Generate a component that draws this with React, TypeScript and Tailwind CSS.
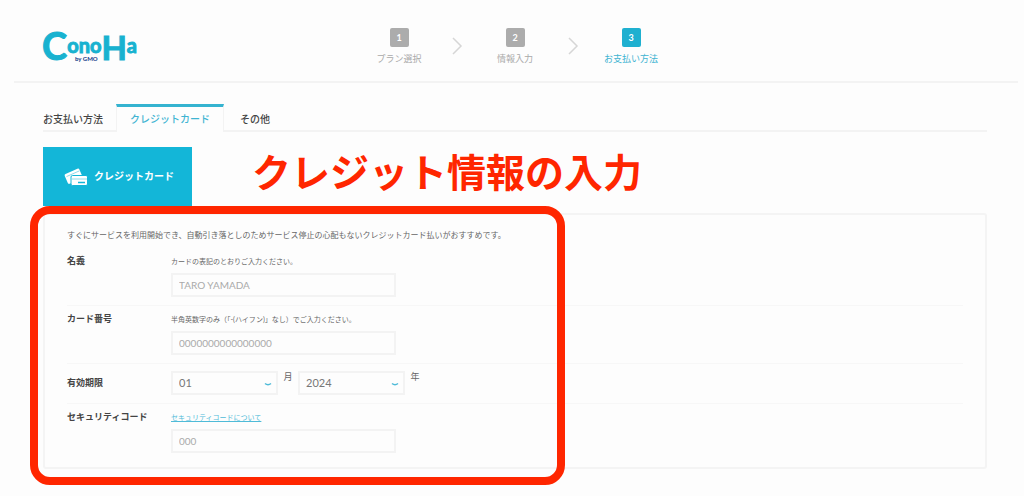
import { ReactNode, useState } from "react";
import clsx from "clsx";

const steps = ["プラン選択", "情報入力", "お支払い方法"];
const tabs = ["お支払い方法", "クレジットカード", "その他"];
const months = Array.from({ length: 12 }, (_, i) =>
  String(i + 1).padStart(2, "0")
);
const years = Array.from({ length: 10 }, (_, i) => String(2024 + i));

function App() {
  const [activeTab, setActiveTab] = useState(1);

  return (
    <div className="min-h-screen bg-[#fdfdfd] pb-2 font-['Lato','Noto_Sans_CJK_JP',sans-serif] text-[#444]">
      <Header current={2} />

      <main className="ml-[43px] mr-[37px] pt-[21px]">
        <nav className="flex h-7 border-b-2 border-[#f3f3f3] text-[10px] font-medium">
          {tabs.map((tab, i) => (
            <button
              key={tab}
              type="button"
              onClick={() => setActiveTab(i)}
              className={clsx(
                "h-7 border-t-[3px] px-[13px] first:pl-0 last:pl-4",
                i === activeTab
                  ? "border-x border-x-[#f3f3f3] border-t-[#35b3d0] bg-[#fdfdfd] text-[#3fb4d2]"
                  : "border-t-transparent"
              )}
            >
              {tab}
            </button>
          ))}
        </nav>

        <div className="mt-[15px] flex items-start gap-[60px]">
          <button
            type="button"
            className="flex h-[59px] w-[149px] items-center gap-[6px] bg-[#13b6d8] pl-[21px] text-[10px] font-bold text-white"
          >
            <CardsIcon />
            クレジットカード
          </button>
          <h1 className="whitespace-nowrap text-[39px] font-bold leading-[50px] text-[#ff2600]">
            クレジット情報の入力
          </h1>
        </div>

        <div className="relative mt-[7px]">
          <form className="rounded-[3px] border-2 border-[#f4f4f4] px-[22px] pt-[14px] pb-[6px]">
            <p className="text-[8px] leading-3 text-[#666]">
              すぐにサービスを利用開始でき、自動引き落としのためサービス停止の心配もないクレジットカード払いがおすすめです。
            </p>
            <div className="mt-[7px] divide-y divide-[#f7f7f7]">
              <Row label="名義" htmlFor="holder">
                <Hint>カードの表記のとおりご入力ください。</Hint>
                <TextBox id="holder" placeholder="TARO YAMADA" />
              </Row>
              <Row label="カード番号" htmlFor="number">
                <Hint>半角英数字のみ（「-(ハイフン)」なし）でご入力ください。</Hint>
                <TextBox id="number" placeholder="0000000000000000" />
              </Row>
              <Row label="有効期限" htmlFor="month" centered>
                <div className="flex text-[9px] leading-3 text-[#666]">
                  <SelectBox id="month" label="月" options={months} />
                  <SelectBox id="year" label="年" options={years} />
                </div>
              </Row>
              <Row label="セキュリティコード" htmlFor="code">
                <Hint>
                  <a href="#code" className="text-[#4fbbd8] underline">
                    セキュリティコードについて
                  </a>
                </Hint>
                <TextBox id="code" placeholder="000" />
              </Row>
            </div>
          </form>
          {/* highlight around the fields to fill in */}
          <div className="pointer-events-none absolute -top-[7px] -bottom-4 -left-[13px] w-[535px] rounded-[20px] border-8 border-[#ff2600]" />
        </div>
      </main>
    </div>
  );
}

export default App;

const Header = ({ current }: { current: number }) => (
  <header className="ml-[14px] mr-[6px] grid grid-cols-[1fr_auto_1fr] border-b-2 border-[#f3f3f3] pt-7 pr-[31px] pb-[13px] pl-[29px]">
    <a href="#top" aria-label="ConoHa by GMO" className="h-10 w-[98px]">
      <Logo />
    </a>
    <ol className="flex">
      {steps.map((step, i) => (
        <li key={step} className="flex">
          {i > 0 && (
            <svg
              viewBox="0 0 20 36"
              className="h-9 w-5 fill-none stroke-[#d6d6d6]"
            >
              <path d="M6 10l8 8-8 8" strokeWidth="1.5" />
            </svg>
          )}
          <div
            className={clsx(
              "flex w-24 flex-col items-center gap-[6px] text-[9px] leading-3",
              i === current ? "text-[#3fb4d2]" : "text-[#aaa]"
            )}
          >
            <span
              className={clsx(
                "flex h-[19px] w-[19px] items-center justify-center rounded-[2px] font-bold text-white",
                i === current ? "bg-[#1fb0d0]" : "bg-[#acacac]"
              )}
            >
              {i + 1}
            </span>
            {step}
          </div>
        </li>
      ))}
    </ol>
  </header>
);

const Row = ({
  label,
  htmlFor,
  centered,
  children,
}: {
  label: string;
  htmlFor: string;
  centered?: boolean;
  children: ReactNode;
}) => (
  <div
    className={clsx("flex pt-[7px] pb-2", centered ? "items-center" : "items-start")}
  >
    <label
      htmlFor={htmlFor}
      className="w-[104px] shrink-0 text-[9px] font-bold leading-3"
    >
      {label}
    </label>
    <div>{children}</div>
  </div>
);

const Hint = ({ children }: { children: ReactNode }) => (
  <p className="mb-[6px] text-[7px] leading-3 text-[#666]">{children}</p>
);

const TextBox = ({ id, placeholder }: { id: string; placeholder: string }) => (
  <input
    type="text"
    id={id}
    placeholder={placeholder}
    className="block h-6 w-[225px] border-2 border-[#f3f3f3] bg-[#fdfdfd] px-[6px] text-[10px] placeholder:text-[#aaa]"
  />
);

const SelectBox = ({
  id,
  label,
  options,
}: {
  id: string;
  label: string;
  options: string[];
}) => (
  <div className="flex">
    <div className="relative">
      <select
        id={id}
        className="block h-6 w-[107px] appearance-none border-2 border-[#f3f3f3] bg-[#fdfdfd] px-[6px] text-[11px] text-[#777]"
      >
        {options.map((option) => (
          <option key={option}>{option}</option>
        ))}
      </select>
      <svg
        viewBox="0 0 8 5"
        className="pointer-events-none absolute right-[6px] bottom-2 h-[5px] w-2 fill-none stroke-[#4fbbd8]"
      >
        <path d="M1 1.5Q4 4 7 1.5" strokeWidth="1.5" />
      </svg>
    </div>
    <label htmlFor={id} className="w-5 text-center">
      {label}
    </label>
  </div>
);

const Logo = () => (
  <svg
    viewBox="0 0 98 40"
    className="h-10 w-[98px] overflow-visible fill-[#18b2d0] font-['Lato'] font-bold"
  >
    <text x="-1" y="32" fontSize="38" className="stroke-[#18b2d0]">
      C
      <tspan dy="-7" fontSize="20">
        ono
      </tspan>
      <tspan dy="7" fontSize="33">
        H
      </tspan>
      <tspan dy="-7" fontSize="20">
        a
      </tspan>
    </text>
    <text
      x="32"
      y="33"
      fontSize="6"
      className="fill-[#27488f] font-black"
    >
      by GMO
    </text>
  </svg>
);

const CardsIcon = () => (
  <svg viewBox="0 0 24 18" className="h-[18px] w-6">
    <rect
      x="1.5"
      y="3"
      width="16"
      height="10.5"
      rx="1.5"
      fill="#fff"
      transform="rotate(-24 9.5 8)"
    />
    <path d="M2.5 8.6l13-5.8" stroke="#8fdcec" strokeWidth="1" />
    <rect
      x="7"
      y="7.5"
      width="16.5"
      height="10"
      rx="1.5"
      fill="#fff"
      stroke="#13b6d8"
      strokeWidth="1"
    />
    <path d="M8 11h15" stroke="#8fdcec" strokeWidth="1" />
    <path d="M14 14.5h7" stroke="#13b6d8" strokeWidth="1.5" />
  </svg>
);
